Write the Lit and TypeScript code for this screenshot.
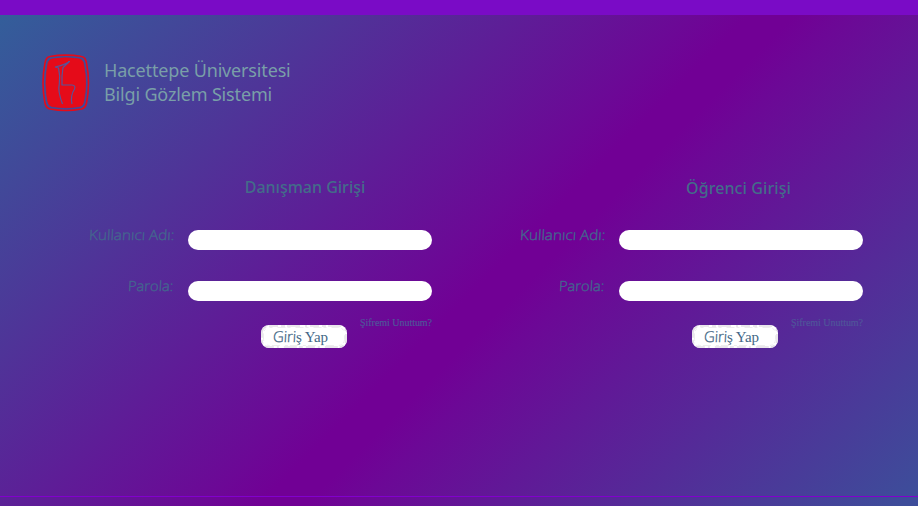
import { LitElement, html, css } from "lit";
import { customElement, property } from "lit/decorators.js";

@customElement("login-panel")
class LoginPanel extends LitElement {
  @property() heading = "";

  static styles = css`
    :host { display: block; width: 431px; color: #44698c; }
    h2 {
      margin: 0; height: 24px; padding-left: 179px; box-sizing: border-box; width: 431px;
      text-align: center; font: 500 16px/24px "Noto Sans", sans-serif; color: #436c8a; white-space: nowrap;
    }
    :host([second]) h2 { padding-left: 184px; padding-top: 1px; letter-spacing: 0.1px; }
    .row { display: grid; grid-template-columns: 174px 244px; column-gap: 14px; height: 20px; margin-top: 31px; }
    label {
      justify-self: end; font: 300 14px/20px "Open Sans", sans-serif; color: #44648f; -webkit-text-stroke: 0.4px #44648f;
      margin-top: -5px; white-space: nowrap; transform-origin: right center; transform: scaleX(1.09) skewX(-3deg);
    }
    .pass label { padding-right: 1px; transform: scaleX(1.05) skewX(-3deg); }
    input {
      box-sizing: border-box; width: 244px; height: 20px; border: 0; border-radius: 10px;
      padding: 0 8px; background: #fff; outline: none;
    }
    .actions { display: flex; width: 432px; justify-content: flex-end; align-items: flex-start; margin-top: 15px; }
    button {
      position: relative; width: 86px; height: 23px; margin: 9px 13px 0 0; padding: 1px 7px 1px 0; border: 0; border-radius: 8px;
      background: #fff; color: #436786; font: 15px/21px "Liberation Serif", serif; white-space: nowrap; letter-spacing: -0.12px;
    }
    button svg { position: absolute; inset: 0; }
    .sans { display: inline-block; font: 300 15px/20px "Open Sans", sans-serif; -webkit-text-stroke: 0.3px #436786; transform: skewX(-3deg); }
    a {
      width: 72px; white-space: nowrap; color: #50559a; letter-spacing: -0.03px;
      font: 10px/14px "Liberation Serif", serif; -webkit-text-stroke: 0.2px #50559a;
    }
  `;

  render() {
    return html`
      <h2>${this.heading}</h2>
      <div class="row user"><label for="user">Kullanıcı Adı:</label><input id="user" /></div>
      <div class="row pass"><label for="pass">Parola:</label><input id="pass" type="password" /></div>
      <div class="actions">
        <button>
          <svg width="86" height="23" fill="none">
            <rect x="1" y="1" width="84" height="21" rx="7" stroke="#e4e0e6" stroke-width="1.500" stroke-dasharray="9 3 4 2 13 5 2 3"/>
            <rect x="2.500" y="2.500" width="81" height="18" rx="6" stroke="#ededed" stroke-dasharray="3 5 8 2"/>
          </svg>
          <span class="sans">Giri</span>ş Yap
        </button>
        <a>Şifremi Unuttum?</a>
      </div>
    `;
  }
}

@customElement("app-root")
class AppRoot extends LitElement {
  static styles = css`
    :host {
      display: flex; flex-direction: column; height: 506px; overflow: hidden;
      background: linear-gradient(135deg, #335e9a 0, #6c0896 490px, #710095 530px, #710095 562px, #6c0896 600px, #3d4d9a 985px) 0 15px / 100% 491px no-repeat;
    }
    .top { height: 15px; background: #7a0bc6; flex: none; }
    header { display: flex; height: 160px; flex: none; box-sizing: border-box; padding: 39px 0 0 42px; }
    .title { margin: 4px 0 0 14px; font: 18px/24px "Noto Sans", sans-serif; color: #799fa8; white-space: nowrap; letter-spacing: -0.16px; }
    main { display: flex; height: 321px; flex: none; }
    .line { height: 1px; flex: none; background: #8200cc; }
  `;

  render() {
    return html`
      <div class="top"></div>
      <header>
        <svg width="48" height="58" viewBox="0 0 48 58" fill="none">
          <path d="M8 2.500Q24-.3 39.500 2.500Q43.500 3 44.500 9Q48.500 29 44.500 49Q43.500 54 39.500 55Q24 58 8 55Q4 54 3 49Q-1 29 3 9Q4 3 8 2.500Z" stroke="#e50b19" stroke-width="1.600"/>
          <path d="M10 5Q24 2.500 37.500 5Q41 5.700 41.700 10.500Q45.500 29 41.700 47.500Q41 51.800 37.500 52.500Q24 55 10 52.500Q6.500 51.800 5.800 47.500Q2 29 5.800 10.500Q6.500 5.700 10 5Z" fill="#e50b19" stroke="#e50b19" stroke-width=".8"/>
          <path d="M27.500 7.500Q23 11 13 13L16.500 14Q18.500 22 17.300 30Q15.500 37 20.500 50M27.500 7.500L21 13.500Q19.500 22 20 31H30Q34 31.500 32.500 35Q28 42 30 50" stroke="#55569b" stroke-width="1.200"/>
        </svg>
        <div class="title"><div>Hacettepe Üniversitesi</div><div>Bilgi Gözlem Sistemi</div></div>
      </header>
      <main>
        <login-panel heading="Danışman Girişi"></login-panel>
        <login-panel second heading="Öğrenci Girişi"></login-panel>
      </main>
      <div class="line"></div>
    `;
  }
}
